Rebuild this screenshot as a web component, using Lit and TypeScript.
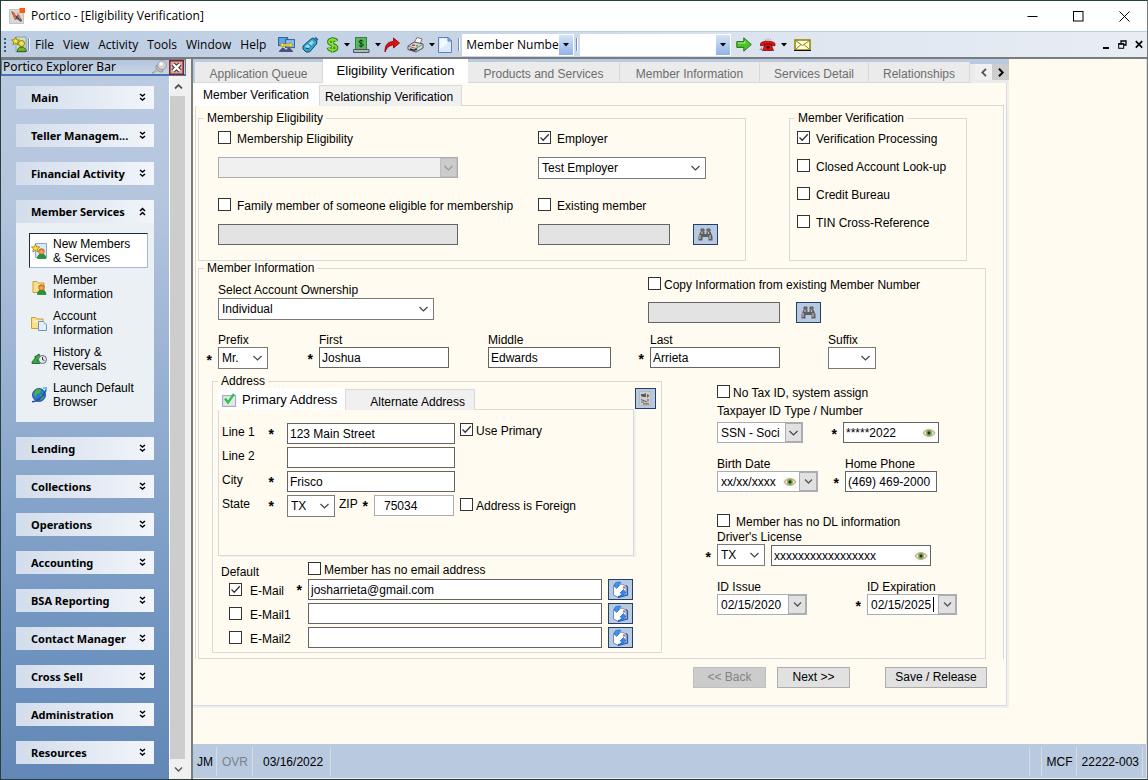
import { LitElement, html, css, svg, nothing } from "lit";
import { customElement } from "lit/decorators.js";
import { classMap } from "lit/directives/class-map.js";

/* ---------- icons ---------- */

const icon = (w: number, h: number, body: unknown) =>
  html`<svg class="icon" width=${w} height=${h} viewBox="0 0 ${w} ${h}" aria-hidden="true">${body}</svg>`;

const person = svg`
  <path d="M6.500 15.500c0-3 1.500-4.500 4-4.500s4.500 1.500 4.500 4.500z" fill="#1f9a35" stroke="#0f6a20" stroke-width=".6"/>
  <circle cx="10.500" cy="8.500" r="2.800" fill="#f0a050" stroke="#a05a10" stroke-width=".6"/>
  <path d="M7.600 8c.2-3 5.600-3.200 5.900 0-1.500-.3-2.500-1-3-1.800-.6 1-1.500 1.600-2.900 1.800z" fill="#c2701c"/>`;

const icons = {
  app: icon(16, 16, svg`
    <rect x=".5" y="1.500" width="14" height="14" fill="#d8d8d8" stroke="#c4c4c4"/>
    <path d="M2 3l3 2 2 3 2-1 4 5-1 2-4-3-2 1z" fill="#3f4f6c"/>
    <path d="M3 3l3 2 1.500 7L5 9.500zM8 4l2.500 3 2 6-3-3z" fill="#f06a28"/>
    <rect x="10.500" y="0" width="5.500" height="5" fill="#ff5c0a"/>`),
  member: icon(17, 17, svg`
    <path d="M5 1h10v15H5z" fill="#cfe0b8" stroke="#7d94ae" stroke-width=".8"/>
    <circle cx="10.500" cy="7.500" r="3" fill="#f4e24a" stroke="#6a5a10" stroke-width=".8"/>
    <path d="M6 15.500c.3-6 9-6 9.300 0z" fill="#6fb52a" stroke="#274c10" stroke-width=".8"/>
    <path d="M4.500 1l1 2.800 3 .2-2.300 1.800.8 3-2.500-1.700-2.500 1.700.8-3L.5 4l3-.2z" fill="#ffee20" stroke="#7c6c00" stroke-width=".7"/>`),
  newMember: icon(16, 16, svg`
    <path d="M4.500.5h11v14h-11z" fill="#dbe8f8" stroke="#8aa6cc"/>
    ${person}
    <path d="M4.500 1l1.200 2.800 3 .2-2.300 2 .8 3-2.700-1.700L1.800 9l.8-3L.4 4l3-.2z" fill="#ffd83a" stroke="#a07a10" stroke-width=".8"/>`),
  info: icon(16, 16, svg`
    <path d="M2 2.500h4l1.500 1.500H13v9.500H2z" fill="#fbe08a" stroke="#caa03a"/>${person}`),
  account: icon(16, 16, svg`
    <path d="M.5 2.500h4L6 4h6v9.500H.5z" fill="#fbe08a" stroke="#caa03a"/>
    <path d="M2.500 5.500h9v2h-9z" fill="#fff2be"/>
    <path d="M7.500 6.500h5l3 3v6h-8z" fill="#e4effc" stroke="#6f92c0"/><path d="M12.500 6.500v3h3z" fill="#b8d0ee"/>`),
  history: icon(16, 16, svg`
    <path d="M1 11l4-5H3.500L8 3l2 4H8.500L6 10h3v2.500H1z" fill="#38a846" stroke="#126a24" stroke-width=".9"/>
    <circle cx="11.500" cy="8.500" r="4" fill="#e6eaf0" stroke="#5c6670"/>
    <path d="M11.500 6v2.800l2 .5" fill="none" stroke="#333"/>`),
  globe: icon(16, 16, svg`
    <circle cx="8" cy="8" r="6.500" fill="#2f74d8" stroke="#123f90" stroke-width=".8"/>
    <path d="M4 4c2-2 5-2 6-1l-1 3-3 1-1 3-2-2zM9 8l4-1c0 3-1 5-3 6z" fill="#46b838"/>
    <path d="M1 14.500c4 1 12-5 14-12" fill="none" stroke="#1e4fa4" stroke-width="1.500"/>
    <path d="M12 1l3.500-.2-.2 3.600" fill="none" stroke="#5fb6e8" stroke-width="1.300"/>`),
  monitors: icon(17, 16, svg`
    <rect x=".6" y=".6" width="9" height="8" fill="#5aa8ee" stroke="#36589a"/>
    <rect x="7.600" y="2.600" width="8.800" height="8" fill="#86c4f6" stroke="#36589a"/>
    <path d="M2 8l3-2.500v1.500h7V5.500L15 8l-3 2.500V9H5v1.500z" fill="#ffe23a" stroke="#9a7a00" stroke-width=".6"/>
    <path d="M1 14l3-3h2l2 2 2-2h2l3 3v1H1z" fill="#4a4e80"/>`),
  phone: icon(17, 16, svg`
    <path d="M1 9l8-7 2-1 4 3.500-.5 2.500-7 8H4L1 12z" fill="#38a2cc" stroke="#0c4a70"/>
    <path d="M3 9.500l7-6 2 2-6.500 6.500z" fill="#8edcf2"/><path d="M12 1l2-1 2.500 2.500L15 4z" fill="#1c6c98"/>
    <path d="M6 6.500l3 3M4 11l3 1" stroke="#0c4a70"/>`),
  dollar: icon(13, 16, svg`
    <path d="M10.500 4.200C9.500 1.800 3 1.800 3 5c0 3.500 7.500 2.300 7.500 5.700 0 3.400-7 3.300-8-.2" fill="none" stroke="#2e7a10" stroke-width="3.800"/>
    <path d="M6.500.5v15" stroke="#2e7a10" stroke-width="3"/>
    <path d="M10.500 4.200C9.500 1.800 3 1.800 3 5c0 3.500 7.500 2.300 7.500 5.700 0 3.400-7 3.300-8-.2M6.500 1v14" fill="none" stroke="#86e030" stroke-width="1.800"/>`),
  cash: icon(17, 16, svg`
    <rect x="2.500" y=".5" width="11" height="12" fill="#58b860" stroke="#3c803f"/>
    <path d="M10.300 4.600C9.500 3 6 3 6 4.800c0 1.700 4.300 1.300 4.300 3.200 0 1.800-3.600 1.800-4.500.2M8 2.500v8" fill="none" stroke="#0d3412"/>
    <path d="M.5 12.500h15.500v3H.5z" fill="#b4b8be" stroke="#50545a"/>`),
  redo: icon(16, 16, svg`
    <path d="M1 15c-.3-7 3-10.500 8.500-10.500V1l6 5-6 5V8C6 8 3 10 1 15z" fill="#e01010" stroke="#7a0000" stroke-width=".8"/>`),
  printer: icon(17, 16, svg`
    <path d="M7 6l3-5.500 5 1.500-2 5z" fill="#fff" stroke="#777"/>
    <path d="M1 9l6-4 9 2v4l-7 4-8-2.500z" fill="#d4d6da" stroke="#4e5258"/>
    <path d="M1 9l8 2.500L16 7M9 11.500V15" fill="none" stroke="#7d8188"/>
    <path d="M3 12l4 1.300 3-1.500" fill="none" stroke="#2a2a2a" stroke-width="1.500"/>
    <rect x="5" y="7.500" width="3" height="1.500" fill="#e03a28"/><rect x="9" y="8" width="2" height="1.500" fill="#38b838"/>`),
  page: icon(14, 16, svg`
    <path d="M.5.500h9.500l3.500 3.500v11.500H.5z" fill="#dceafc" stroke="#5c80b8"/>
    <path d="M2 2h7v5L2 12z" fill="#f2f8ff"/><path d="M10 .5V4h3.500z" fill="#9fbce4" stroke="#5c80b8"/>`),
  go: icon(16, 15, svg`
    <path d="M.8 4.600h7V.8l7.500 6.700-7.500 6.700v-3.800h-7z" fill="#4cc42a" stroke="#21741a"/>
    <path d="M2 6h7V4" fill="none" stroke="#b2ee90"/>`),
  redPhone: icon(17, 13, svg`
    <path d="M6 1l1 2M9 0v2M12 1l-1 1.500" stroke="#aaa"/>
    <path d="M1.500 5.500C3 2.500 14 2.500 16 5.500v2.200h-3.500V6H5.500v1.700H1.500z" fill="#e81010" stroke="#600" stroke-width=".7"/>
    <path d="M6 6.500h6l2.500 6h-11z" fill="#e81010" stroke="#600" stroke-width=".7"/>
    <circle cx="9" cy="9.200" r="1.500" fill="#300"/><path d="M0 12l3-3v3.500z" fill="#999"/>`),
  envelope: icon(17, 12, svg`
    <rect x="1" y="1" width="15" height="10" fill="#fffce0" stroke="#8c8400" stroke-width="1.500"/>
    <path d="M1.500 1.500l7 5 7-5M1.500 10.500L7 5.500M15.500 10.500L10 5.500" fill="none" stroke="#8c8400"/>
    <path d="M0 11.500h17" stroke="#111"/>`),
  pin: icon(15, 15, svg`
    <path d="M0 13.500l5-5 1.500 1.500z" fill="#eee" stroke="#777" stroke-width=".6"/>
    <path d="M4 6l3-2 5 5-2 3c-3 .5-6.500-2.500-6-6z" fill="#bdbdbd" stroke="#8a8a8a" stroke-width=".8"/>
    <circle cx="10" cy="5.200" r="4.400" fill="#d2d2d2" stroke="#949494" stroke-width=".8"/>
    <circle cx="9" cy="4" r="1.800" fill="#fafafa"/>`),
  closeRed: icon(15, 15, svg`
    <rect x=".75" y=".75" width="13.500" height="13.500" fill="#d8a8a4" stroke="#7c2424" stroke-width="1.500"/>
    <path d="M4 4l7 7M11 4l-7 7" stroke="#4a3a3a" stroke-width="4.400"/>
    <path d="M4 4l7 7M11 4l-7 7" stroke="#fff" stroke-width="2.300"/>`),
  binoculars: icon(15, 13, svg`
    <path d="M3 1h3v2H3zM9 1h3v2H9z" fill="#8b8b8b" stroke="#555"/>
    <path d="M2.500 3.500h4V6h2V3.500h4l2 5V12.500h-4V9h-6v3.500h-4V8.500z" fill="#5e5e5e"/>
    <path d="M2 7v4M12 7v4M4 4v2M10.500 4v2" stroke="#bdbdbd" stroke-width="1.200"/>`),
  note: icon(13, 15, svg`
    <rect x=".5" y=".5" width="11.500" height="14" fill="#cfcfcf" stroke="#b8b8b8"/>
    <path d="M2 3h3l2-1v4H4L2 5zM8 3l2.500 1.500L8 7z" fill="#5c5c5c"/>
    <path d="M2 8.500l6 2.500M9 8v2.500M2 11h3M4 12.800h6" stroke="#6a6a6a" stroke-width="1.200"/>`),
  mail: icon(17, 17, svg`
    <path d="M1.500 5.500L10 3l4 2v8.500L5.500 16l-4-2z" fill="#fff" stroke="#6b8fc8"/>
    <path d="M14 4.500l1.500 1.500v8L6 16.500" fill="none" stroke="#2d5aa8" stroke-width="1.200"/>
    <path d="M2.500 3C4 1 7 .5 9 1.500L7.500 2.500C6.500 3 6 3.500 6 4.500h1.500L4.500 7.500 1.800 4.500H3z" fill="#3d9af0" stroke="#1a58b8" stroke-width=".6"/>
    <path d="M6 15.500c2.500-.5 3.500-1.500 3.500-3.500H8L11.500 8.500 14 12h-1.200c-.5 3-3.800 4-6.800 3.500z" fill="#2f8ae8" stroke="#1a58b8" stroke-width=".6"/>
    <rect x="11" y="5.500" width="2" height="2" fill="#e05a3a"/>`),
  eye: icon(14, 12, svg`
    <rect width="14" height="12" fill="#fbfbf4"/>
    <path d="M1.200 6c3-4.500 8.600-4.500 11.600 0-3 4.500-8.600 4.500-11.600 0z" fill="#ede4dc" stroke="#c4ab98" stroke-width="1.200"/>
    <circle cx="7" cy="6" r="2.900" fill="#74a84a"/><circle cx="7" cy="6" r="1.400" fill="#143c0c"/>`),
  tick: icon(15, 14, svg`
    <rect x=".6" y="2.600" width="13" height="10.800" fill="#e4e8ee" stroke="#9aa4b2"/>
    <path d="M3 5.500l3 4L12 1" fill="none" stroke="#35c048" stroke-width="2.400"/>`),
  down: icon(9, 5, svg`<path d="M1 .5L4.500 4 8 .5" fill="none" stroke="#555" stroke-width="1.300"/>`),
  up: icon(9, 5, svg`<path d="M1 4.500L4.500 1 8 4.500" fill="none" stroke="#555" stroke-width="1.800"/>`),
  left: icon(6, 9, svg`<path d="M5 .8L1.300 4.500 5 8.200" fill="none" stroke="#555" stroke-width="1.800"/>`),
  right: icon(6, 9, svg`<path d="M1 .8l3.700 3.700L1 8.200" fill="none" stroke="#000" stroke-width="2"/>`),
  caret: icon(6, 4, svg`<path d="M0 0h6L3 3.500z" fill="#000"/>`),
  expand: icon(7, 9, svg`<path d="M1 1l2.500 2L6 1M1 5l2.500 2L6 5" fill="none" stroke="#000" stroke-width="1.500"/>`),
  collapse: icon(7, 9, svg`<path d="M1 4l2.500-2.500L6 4M1 8l2.500-2.500L6 8" fill="none" stroke="#000" stroke-width="1.500"/>`),
  min: icon(11, 11, svg`<path d="M.5 5.500h10" stroke="#000"/>`),
  max: icon(11, 11, svg`<rect x=".5" y=".5" width="9.500" height="9.500" fill="none" stroke="#000"/>`),
  close: icon(11, 11, svg`<path d="M.5.500l10 10M10.500.500l-10 10" stroke="#000"/>`),
  mdiMin: icon(8, 9, svg`<path d="M1 8h6" stroke="#000" stroke-width="2"/>`),
  mdiRestore: icon(9, 9, svg`<path d="M3 3V1h5v4H6M2.500 1h6" fill="none" stroke="#000" stroke-width="1.300"/>
    <rect x=".7" y="3.700" width="5" height="4.600" fill="none" stroke="#000"/><path d="M.2 4h6" stroke="#000" stroke-width="1.500"/>`),
  mdiClose: icon(8, 9, svg`<path d="M.8 1.200l6.400 6.400M7.200 1.200L.8 7.600" stroke="#000" stroke-width="1.700"/>`),
};

/* ---------- data ---------- */

type NavGroup = { name: string; items?: { name: string; icon: unknown; current?: boolean }[] };

const NAV: NavGroup[] = [
  { name: "Main" },
  { name: "Teller Managem..." },
  { name: "Financial Activity" },
  {
    name: "Member Services",
    items: [
      { name: "New Members &\u00a0Services", icon: icons.newMember, current: true },
      { name: "Member Information", icon: icons.info },
      { name: "Account Information", icon: icons.account },
      { name: "History & Reversals", icon: icons.history },
      { name: "Launch Default Browser", icon: icons.globe },
    ],
  },
  { name: "Lending" },
  { name: "Collections" },
  { name: "Operations" },
  { name: "Accounting" },
  { name: "BSA Reporting" },
  { name: "Contact Manager" },
  { name: "Cross Sell" },
  { name: "Administration" },
  { name: "Resources" },
];

const TABS = [
  "Application Queue",
  "Eligibility Verification",
  "Products and Services",
  "Member Information",
  "Services Detail",
  "Relationships",
];

const EMAILS = [
  { name: "E-Mail", value: "josharrieta@gmail.com", checked: true, required: true },
  { name: "E-Mail1", value: "", checked: false, required: false },
  { name: "E-Mail2", value: "", checked: false, required: false },
];

const check = (text: string, checked = false) => html`
  <label class="check"><input type="checkbox" .checked=${checked} /><span>${text}</span></label>`;

const star = html`<span class="star" aria-hidden="true">*</span>`;

const option = (value: string) => html`<option>${value}</option>`;

const field = (id: string, label: string, control: unknown, required = false) => html`
  <div class="field">
    <label for=${id}>${label}</label>
    <div class="control">${required ? star : html`<span class="star"></span>`}${control}</div>
  </div>`;

/* ---------- explorer bar ---------- */

@customElement("explorer-bar")
export class ExplorerBar extends LitElement {
  static styles = css`
    :host { display: flex; flex-direction: column; width: 185px; font: 12px/14px "Liberation Sans", Arial, sans-serif; }
    * { box-sizing: border-box; }
    .icon { display: block; flex: none; }
    button { font: inherit; color: inherit; border: 0; padding: 0; background: none; }
    .title { display: flex; align-items: center; height: 17px; gap: 2px; padding: 0 1px 0 1px; border: 1px solid #6b7a90; border-bottom: 2px solid #4a72b4; background: linear-gradient(#b4c4da, #c9d7e4); font: 12px/14px "Noto Sans", sans-serif; }
    .title h2 { flex: 1; margin: 0; font: inherit; }
    .scroller { flex: 1; display: flex; }
    .groups { flex: 1; display: flex; flex-direction: column; gap: 15px; padding: 10px 15px 13px; background: linear-gradient(#bacae1, #b4c5de 18%, #7094c0 80%, #6388b7); }
    .head { display: flex; align-items: center; justify-content: space-between; width: 100%; height: 23px; padding: 0 8px 0 15px; background: linear-gradient(90deg, #d3ddeb, #f2f5fa); font: bold 11px/23px "Noto Sans", sans-serif; text-align: left; }
    .items { display: flex; flex-direction: column; gap: 1px; margin: 0; padding: 10px 6px 10px 13px; list-style: none; background: #eaf0f4; }
    .items a { display: flex; align-items: center; gap: 6px; height: 35px; padding: 0 1px; border: 1px solid transparent; color: #000; text-decoration: none; }
    .items .current { border-color: #1d2b48 #a4b8d8 #a4b8d8 #1d2b48; background: #fff; }
    .bar { display: flex; flex-direction: column; width: 17px; border-left: 1px solid #fff; background: #f0f0f0; }
    .bar button { display: grid; place-items: center; height: 20px; }
    .thumb { flex: 1; margin-right: 1px; background: #cdcdcd; }
  `;

  render() {
    return html`
      <div class="title">
        <h2>Portico Explorer Bar</h2>
        <button aria-label="Pin">${icons.pin}</button>
        <button aria-label="Close">${icons.closeRed}</button>
      </div>
      <div class="scroller">
        <nav class="groups">
          ${NAV.map((g) => html`
            <section>
              <button class="head">${g.name}${g.items ? icons.collapse : icons.expand}</button>
              ${g.items
                ? html`<ul class="items">
                    ${g.items.map((i) => html`<li>
                      <a href="#" class=${classMap({ current: !!i.current })}>${i.icon}<span>${i.name}</span></a>
                    </li>`)}
                  </ul>`
                : nothing}
            </section>`)}
        </nav>
        <div class="bar">
          <button aria-label="Scroll up">${icons.up}</button>
          <div class="thumb"></div>
          <button aria-label="Scroll down">${icons.down}</button>
        </div>
      </div>`;
  }
}

/* ---------- eligibility form ---------- */

@customElement("eligibility-form")
export class EligibilityForm extends LitElement {
  static styles = css`
    :host { display: block; font: 12px/14px "Liberation Sans", Arial, sans-serif; }
    * { box-sizing: border-box; }
    .icon { display: block; flex: none; }
    button, input, select { margin: 0; font: inherit; color: #000; border-radius: 0; outline: 0; }
    input, select { width: 100%; min-width: 0; height: 21px; padding: 0 2px; border: 1px solid #646464; background: #fff; }
    input:disabled { background: #e3e3e3; }
    select { appearance: none; height: 22px; padding: 0 20px 0 3px; border-color: #7a7a7a; opacity: 1;
      background: #fff url("data:image/svg+xml,%3Csvg xmlns='http://www.w3.org/2000/svg' width='18' height='20'%3E%3Cpath d='M4.500 8L8.500 12 12.500 8' fill='none' stroke='%23444' stroke-width='1.200'/%3E%3C/svg%3E") right center no-repeat; }
    select.boxed { height: 21px; border-color: #abadb3;
      background-image: url("data:image/svg+xml,%3Csvg xmlns='http://www.w3.org/2000/svg' width='17' height='19'%3E%3Crect x='.5' y='.5' width='16' height='18' fill='%23e1e1e1' stroke='%23abadb3'/%3E%3Cpath d='M4.500 8L8.500 12 12.500 8' fill='none' stroke='%23444' stroke-width='1.200'/%3E%3C/svg%3E"); }
    select.boxed:disabled { background-color: #f0f0f0;
      background-image: url("data:image/svg+xml,%3Csvg xmlns='http://www.w3.org/2000/svg' width='17' height='19'%3E%3Crect x='.5' y='.5' width='16' height='18' fill='%23cccccc' stroke='%23bfbfbf'/%3E%3Cpath d='M4.500 8L8.500 12 12.500 8' fill='none' stroke='%23999' stroke-width='1.200'/%3E%3C/svg%3E"); }
    fieldset { min-width: 0; margin: 0; padding: 0; border: 1px solid #d9d9d9; }
    legend { margin-left: 5px; padding: 0 3px; }

    .tabs { display: flex; align-items: flex-end; margin-bottom: -1px; }
    .tab { height: 21px; padding: 0 8px 0 5px; border: 1px solid #d9d9d9; border-bottom: 0; background: #f0f0f0; line-height: 23px; white-space: nowrap; }
    .tab.active { height: 23px; padding: 0 9px 0 7px; border-color: #fff; background: #fff; }
    .page { padding: 5px 0 0 2px; border: 1px solid #d9d9d9; border-width: 1px 1px 0 1px; margin-right: 3px; }
    .row { display: flex; }
    .find16 { gap: 16px; }
    .find23 { gap: 23px; }
    .top { gap: 43px; }
    .eligibility { width: 548px; }
    .verify { width: 178px; }
    .grid { display: grid; grid-template-columns: 320px auto; row-gap: 19px; padding: 6px 0 15px 19px; }
    .stack { display: flex; flex-direction: column; align-items: flex-start; gap: 12px; }
    .checks { display: flex; flex-direction: column; gap: 14px; padding: 6px 0 0 7px; }
    .check { display: flex; align-items: flex-start; gap: 6px; height: 14px; line-height: 16px; white-space: nowrap; }
    .tight .check { gap: 3px; }
    .check input { appearance: none; flex: none; width: 13px; height: 13px; padding: 0; border: 1px solid #333; background: #fff; }
    .check input:checked { background: #fff url("data:image/svg+xml,%3Csvg xmlns='http://www.w3.org/2000/svg' width='11' height='11'%3E%3Cpath d='M1.500 5.500L4.200 8.200 9.800 2.300' fill='none' stroke='%23333' stroke-width='1.300'/%3E%3C/svg%3E") center no-repeat; }
    .w48 { width: 48px; }
    .w50 { width: 50px; }
    .w123 { width: 123px; }
    .w130 { width: 130px; }
    .w132 { width: 132px; }
    .w160 { width: 160px; }
    .w168 { width: 168px; }
    .w216 { width: 216px; }
    .w240 { width: 240px; }
    .tool { display: grid; place-items: center; flex: none; width: 25px; height: 21px; padding: 0; border: 1px solid #22406a; background: #b8cae2; }
    .tool.square { width: 21px; }

    .info { width: 788px; }
    .ownership { display: grid; grid-template-columns: 430px auto; padding-left: 19px; }
    .owner { display: flex; flex-direction: column; gap: 1px; padding-top: 8px; }
    .copy { display: flex; flex-direction: column; gap: 11px; padding-top: 2px; }
    .names { display: grid; grid-template-columns: 101px 169px 162px 178px auto; padding: 10px 0 0 7px; }
    .field > label { display: block; padding-left: 12px; white-space: nowrap; }
    .control { display: flex; align-items: flex-end; }
    .star { flex: none; width: 12px; height: 20px; padding-right: 6px; font-size: 14px; line-height: 22px; font-weight: bold; text-align: right; }
    .last { display: flex; gap: 43px; padding: 5px 0 5px 13px; }

    .address { width: 450px; flex: none; padding-bottom: 4px; }
    .address-top { display: flex; justify-content: space-between; align-items: flex-start; padding: 0 5px; }
    .address .tab { width: 130px; text-align: right; padding-right: 9px; line-height: 24px; height: 21px; }
    .address .tab.active { display: flex; align-items: center; gap: 5px; width: 127px; height: 22px; padding: 0 3px; font-size: 13px; }
    .panel { display: grid; grid-template-columns: 46px 19px 168px auto; grid-auto-rows: 21px; row-gap: 3px; margin: 0 27px 0 5px; padding: 13px 0 39px 3px; border: 1px solid #d9d9d9; box-shadow: 2px 1px #f0f0f0; line-height: 18px; }
    .panel .check { margin-left: 5px; }
    .panel .low { padding-top: 3px; }
    .zip { display: flex; }
    .zip label { margin: 0 0 0 4px; width: 23px; }
    .zip input { width: 80px; padding-left: 9px; border-color: #abadb3; }
    .zip select { width: 48px; }
    .mails { display: grid; grid-template-columns: 67px 12px 294px 25px; column-gap: 0; row-gap: 3px; padding: 0 0 0 16px; }
    .mails .check { gap: 8px; padding-top: 4px; }
    .mails .tool { margin-left: 6px; }
    .mail-head { display: flex; height: 17px; margin-top: 6px; padding-left: 8px; }
    .mail-head .default { width: 87px; line-height: 21px; }

    .ids { padding-top: 11px; }
    .ids .check { margin-left: 12px; }
    .ids .pair { display: grid; }
    .combo { display: flex; align-items: center; width: 96px; height: 21px; border: 1px solid #646464; background: #fff; }
    .combo.w160 { width: 160px; margin-left: 6px; }
    .combo input { flex: 1; height: 17px; border: 0; }
    .combo > .icon { margin: 0 2px; }
    .combo.date { width: 90px; border-color: #abadb3; }
    .combo.date.eyed { width: 101px; }
    .combo.date input { padding-left: 3px; }
    .combo.date button { display: grid; place-items: center; flex: none; width: 18px; height: 19px; margin-left: auto; padding: 0; border: 1px solid #abadb3; background: #e1e1e1; }
    .combo .caret { flex: none; width: 66px; height: 15px; border-right: 1px solid #000; }
    .tax { grid-template-columns: 126px 108px; padding-top: 5px; }
    .tax label { padding-bottom: 4px; }
    .birth { grid-template-columns: 128px 104px; padding-top: 14px; }
    .dlcheck { padding-top: 22px; }
    .dl { padding-top: 2px; }
    .issue { grid-template-columns: 150px 102px; padding-top: 14px; }
    .wide { width: 86px; }

    .actions { display: flex; justify-content: flex-end; gap: 11px; padding: 8px 20px 18px; }
    .actions button { width: 73px; height: 21px; padding: 0; border: 1px solid #adadad; background: #e1e1e1; line-height: 19px; }
    .actions button:disabled { border-color: #bfbfbf; background: #ccc; color: #838383; }
    .actions .save { width: 102px; margin-left: 24px; }
  `;

  private dateBox(id: string, value: string, extra: { eye?: boolean; caret?: boolean } = {}) {
    return html`<div class=${classMap({ combo: true, date: true, eyed: !!extra.eye })}>
      <input id=${id} class=${classMap({ caret: !!extra.caret })} .value=${value} />
      ${extra.eye ? icons.eye : nothing}
      <button aria-label="Open calendar">${icons.down}</button>
    </div>`;
  }

  render() {
    return html`
      <div class="tabs">
        <button class="tab active">Member Verification</button>
        <button class="tab">Relationship Verification</button>
      </div>
      <div class="page">
        <div class="row top">
          <fieldset class="eligibility">
            <legend>Membership Eligibility</legend>
            <div class="grid">
              <div class="stack">
                ${check("Membership Eligibility")}
                <select class="boxed w240" disabled aria-label="Membership eligibility"></select>
              </div>
              <div class="stack">
                ${check("Employer", true)}
                <select class="w168" aria-label="Employer">${option("Test Employer")}</select>
              </div>
              <div class="stack">
                ${check("Family member of someone eligible for membership")}
                <input class="w240" disabled aria-label="Family member" />
              </div>
              <div class="stack">
                ${check("Existing member")}
                <div class="row find23">
                  <input class="w132" disabled aria-label="Existing member number" />
                  <button class="tool" aria-label="Find member">${icons.binoculars}</button>
                </div>
              </div>
            </div>
          </fieldset>
          <fieldset class="verify">
            <legend>Member Verification</legend>
            <div class="checks">
              ${check("Verification Processing", true)} ${check("Closed Account Look-up")}
              ${check("Credit Bureau")} ${check("TIN Cross-Reference")}
            </div>
          </fieldset>
        </div>

        <fieldset class="info">
          <legend>Member Information</legend>
          <div class="ownership">
            <div class="owner">
              <label for="owner">Select Account Ownership</label>
              <select id="owner" class="w216">${option("Individual")}</select>
            </div>
            <div class="copy tight">
              ${check("Copy Information from existing Member Number")}
              <div class="row find16">
                <input class="w132" disabled aria-label="Existing member number to copy" />
                <button class="tool" aria-label="Find member to copy">${icons.binoculars}</button>
              </div>
            </div>
          </div>
          <div class="names">
            ${field("prefix", "Prefix", html`<select id="prefix" class="w50">${option("Mr.")}</select>`, true)}
            ${field("first", "First", html`<input id="first" class="w130" .value=${"Joshua"} />`, true)}
            ${field("middle", "Middle", html`<input id="middle" class="w123" .value=${"Edwards"} />`)}
            ${field("last", "Last", html`<input id="last" class="w130" .value=${"Arrieta"} />`, true)}
            ${field("suffix", "Suffix", html`<select id="suffix" class="w48">${option("")}</select>`)}
          </div>

          <div class="last">
            <fieldset class="address">
              <legend>Address</legend>
              <div class="address-top">
                <div class="tabs">
                  <button class="tab active">${icons.tick}Primary Address</button>
                  <button class="tab">Alternate Address</button>
                </div>
                <button class="tool square" aria-label="Address notes">${icons.note}</button>
              </div>
              <div class="panel">
                <label for="line1">Line 1</label>${star}
                <input id="line1" .value=${"123 Main Street"} />
                <div class="tight">${check("Use Primary", true)}</div>
                <label for="line2">Line 2</label><span></span>
                <input id="line2" /><span></span>
                <label for="city">City</label>${star}
                <input id="city" .value=${"Frisco"} /><span></span>
                <label for="state">State</label>${star}
                <div class="zip">
                  <select id="state">${option("TX")}</select>
                  <label for="zip">ZIP</label>${star}
                  <input id="zip" .value=${"75034"} />
                </div>
                <div class="tight low">${check("Address is Foreign")}</div>
              </div>
              <div class="mail-head tight">
                <span class="default">Default</span>
                ${check("Member has no email address")}
              </div>
              <div class="mails">
                ${EMAILS.map((m) => html`
                  ${check(m.name, m.checked)}
                  ${m.required ? star : html`<span></span>`}
                  <input aria-label="${m.name} address" .value=${m.value} />
                  <button class="tool" aria-label="Send to ${m.name}">${icons.mail}</button>`)}
              </div>
            </fieldset>

            <div class="ids">
              <div class="tight">${check("No Tax ID, system assign")}</div>
              <div class="pair tax">
                ${field("taxtype", "Taxpayer ID Type / Number", html`<select id="taxtype" class="boxed wide">${option("SSN - Soci")}</select>`)}
                ${field("taxid", "\u00a0", html`<div class="combo"><input id="taxid" aria-label="Taxpayer ID number" .value=${"*****2022"} />${icons.eye}</div>`, true)}
              </div>
              <div class="pair birth">
                ${field("birth", "Birth Date", this.dateBox("birth", "xx/xx/xxxx", { eye: true }))}
                ${field("home", "Home Phone", html`<input id="home" .value=${"(469) 469-2000"} />`, true)}
              </div>
              <div class="dlcheck">${check("Member has no DL information")}</div>
              <div class="dl">
                ${field("dl", "Driver's License", html`
                  <select class="w48" aria-label="License state">${option("TX")}</select>
                  <div class="combo w160"><input id="dl" .value=${"xxxxxxxxxxxxxxxxx"} />${icons.eye}</div>`, true)}
              </div>
              <div class="pair issue">
                ${field("issue", "ID Issue", this.dateBox("issue", "02/15/2020"))}
                ${field("expire", "ID Expiration", this.dateBox("expire", "02/15/2025", { caret: true }), true)}
              </div>
            </div>
          </div>
        </fieldset>
      </div>
      <div class="actions">
        <button disabled>&lt;&lt; Back</button>
        <button>Next &gt;&gt;</button>
        <button class="save">Save / Release</button>
      </div>`;
  }
}

/* ---------- window ---------- */

@customElement("app-root")
export class AppRoot extends LitElement {
  static styles = css`
    :host { display: flex; flex-direction: column; min-height: 100vh; box-sizing: border-box; border: 1px solid #2a3f38; border-right-color: #777; background: #f0f0f0; color: #000; font: 12px/14px "Liberation Sans", Arial, sans-serif; }
    * { box-sizing: border-box; }
    .icon { display: block; flex: none; }
    button { font: inherit; color: inherit; border: 0; padding: 0; background: none; }
    .titlebar { display: flex; align-items: center; gap: 6px; height: 30px; padding: 0 17px 0 8px; background: #fff; font: 12px/16px "Open Sans", sans-serif; }
    .titlebar h1 { flex: 1; margin: 0; font: inherit; }
    .window { display: flex; gap: 35px; }
    .menubar { display: flex; align-items: center; height: 28px; padding: 0 4px 0 3px; border-top: 1px solid #b7cdec; border-bottom: 2px solid #7c7c7c; background: linear-gradient(90deg, #bccde2, #c7d4e6 40%, #dfe6f0 70%, #e8edf4); font: 12px/16px "Open Sans", sans-serif; }
    .grip { width: 2px; height: 14px; margin-right: 5px; background: repeating-linear-gradient(#42557f 0 2px, transparent 2px 4px); }
    .menu { display: flex; gap: 9px; margin-left: 5px; }
    .sep { width: 2px; height: 13px; border-left: 1px solid #6f8fc8; border-right: 1px solid #fff; }
    .sep.after { margin: 0 2px; }
    .tools { display: flex; align-items: center; gap: 7px; margin: 0 4px 0 12px; }
    .tools.end { margin-left: 5px; }
    .drop { display: flex; align-items: center; gap: 5px; margin-right: -4px; }
    .end .drop { margin-right: 0; }
    .pick { display: flex; height: 22px; border: 1px solid #fff; background: #fff; }
    .pick input { width: 96px; padding: 0 0 0 3px; border: 0; outline: 0; font: inherit; background: #fff; }
    .pick.long input { width: 135px; }
    .pick button { display: grid; place-items: center; width: 14px; background: linear-gradient(#d4e4f8, #8fb2e6); }
    .mdi { display: flex; gap: 8px; margin-left: auto; }
    .body { flex: 1; display: flex; }
    .work { flex: 1; min-width: 0; display: flex; flex-direction: column; margin-left: 5px; border-left: 2px solid #7c7c7c; border-right: 1px solid #e0e0e0; background: #fffbf0; }
    .sheet { width: 816px; border-right: 2px solid #f0f0f0; box-shadow: inset -1px -1px #d9d9e2; border-bottom: 2px solid #f0f0f0; }
    .strip { display: flex; align-items: flex-end; height: 24px; margin-right: -2px; padding-left: 2px; background: #b9cbe0; }
    .strip button { height: 21px; padding-top: 4px; border: 1px solid #d9d9d9; border-width: 0 1px 1px 0; background: #ebebeb; color: #6d6d6d; flex: 1 1 auto; }
    .strip .active { height: 24px; padding: 0; border: 0; background: #fff; color: #000; font-size: 13px; }
    .strip .scroll { display: grid; place-items: center; flex: none; width: 17px; height: 16px; padding: 0; border: 0; background: #f0f0f0; }
    .strip .scroll.next { background: #cdcdcd; }
    .scrolls { display: flex; align-items: flex-start; flex: none; height: 19px; padding-left: 5px; background: #ebebeb; }
    .t0 { width: 128px; } .t1 { width: 145px; } .t2 { width: 152px; } .t3 { width: 140px; } .t4 { width: 109px; } .t5 { width: 101px; }
    .form { padding-left: 2px; }
    .status { display: flex; align-items: stretch; height: 34px; margin-top: auto; padding: 3px 3px 2px 0; background: #b9c9df; }
    .status span { padding: 0 3px; border-right: 1px solid #d8dce2; line-height: 31px; }
    .status .date { padding: 0 7px 0 10px; }
    .status .off { padding: 0 4px 0 5px; color: #7d8088; }
    .status .fill { flex: 1; }
    .status .slot { width: 12px; padding: 0; }
    .status .code { padding-left: 5px; }
    .status .mcf { padding-left: 5px; }
    .status .first { padding-left: 4px; }
    .base { height: 1px; background: #f0f0f0; }
  `;

  render() {
    return html`
      <header class="titlebar">
        ${icons.app}
        <h1>Portico - [Eligibility Verification]</h1>
        <div class="window">
          <button aria-label="Minimize">${icons.min}</button>
          <button aria-label="Maximize">${icons.max}</button>
          <button aria-label="Close">${icons.close}</button>
        </div>
      </header>
      <div class="menubar">
        <span class="grip"></span>${icons.member}
        <span class="sep"></span>
        <nav class="menu">
          ${["File", "View", "Activity", "Tools", "Window", "Help"].map((m) => html`<button>${m}</button>`)}
        </nav>
        <div class="tools">
          <button aria-label="Workstations">${icons.monitors}</button>
          <button aria-label="Phone">${icons.phone}</button>
          <button class="drop" aria-label="Cash">${icons.dollar}${icons.caret}</button>
          <button class="drop" aria-label="Drawer">${icons.cash}${icons.caret}</button>
          <button aria-label="Redo">${icons.redo}</button>
          <button class="drop" aria-label="Print">${icons.printer}${icons.caret}</button>
          <button aria-label="New page">${icons.page}</button>
        </div>
        <span class="sep after"></span>
        <div class="pick"><input aria-label="Search by" .value=${"Member Numbe"} /><button aria-label="Open search types">${icons.caret}</button></div>
        <span class="sep after"></span>
        <div class="pick long"><input aria-label="Search value" /><button aria-label="Open recent values">${icons.caret}</button></div>
        <div class="tools end">
          <button aria-label="Go">${icons.go}</button>
          <button class="drop" aria-label="Call">${icons.redPhone}${icons.caret}</button>
          <button aria-label="Mail">${icons.envelope}</button>
        </div>
        <div class="mdi">
          <button aria-label="Minimize document">${icons.mdiMin}</button>
          <button aria-label="Restore document">${icons.mdiRestore}</button>
          <button aria-label="Close document">${icons.mdiClose}</button>
        </div>
      </div>
      <div class="body">
        <explorer-bar></explorer-bar>
        <main class="work">
          <div class="sheet">
            <div class="strip">
              ${TABS.map((t, i) => html`<button class="t${i} ${i === 1 ? "active" : ""}">${t}</button>`)}
              <div class="scrolls">
                <button class="scroll" aria-label="Previous tabs">${icons.left}</button>
                <button class="scroll next" aria-label="Next tabs">${icons.right}</button>
              </div>
            </div>
            <eligibility-form class="form"></eligibility-form>
          </div>
          <footer class="status">
            <span class="first">JM</span><span class="off">OVR</span><span class="date">03/16/2022</span>
            <span class="fill"></span><span class="slot"></span><span class="mcf">MCF</span><span class="code">22222-003</span>
          </footer>
          <div class="base"></div>
        </main>
      </div>`;
  }
}
